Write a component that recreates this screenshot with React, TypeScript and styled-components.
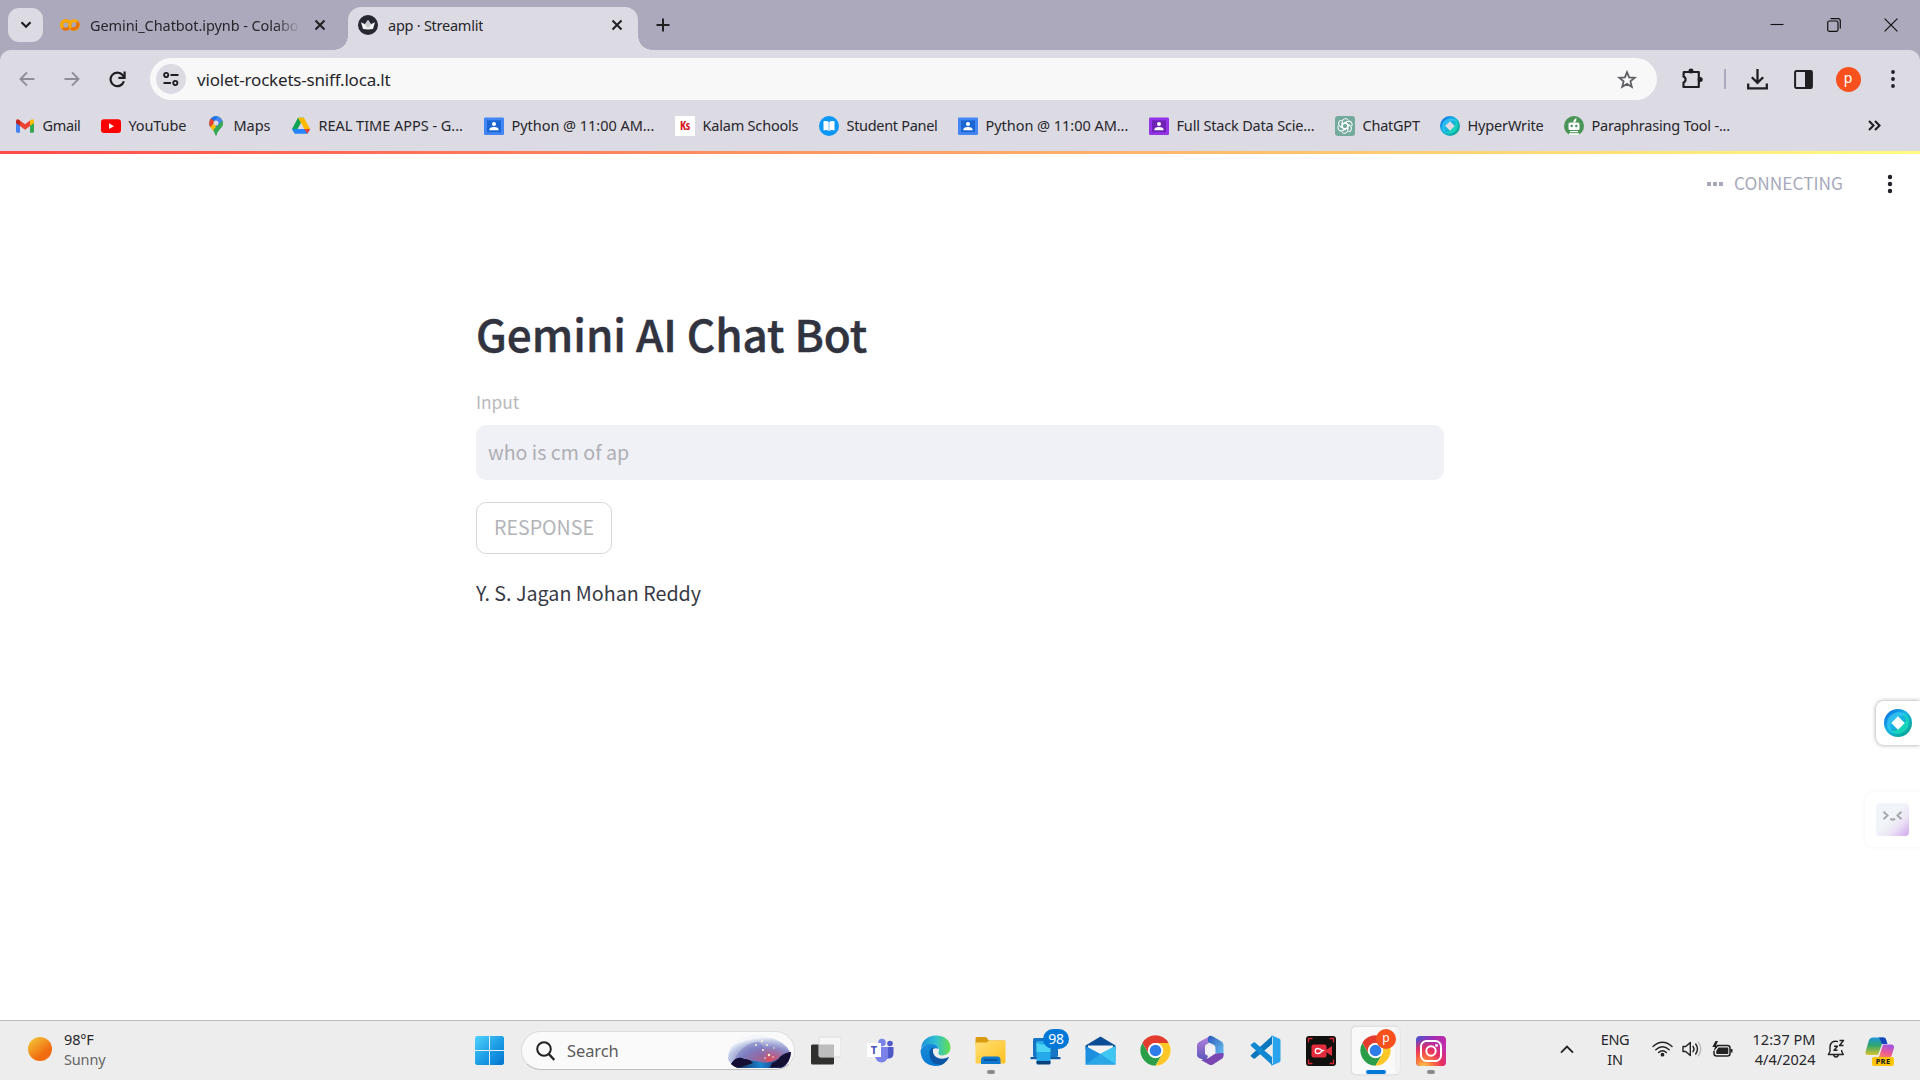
import React from "react";
import styled, { createGlobalStyle } from "styled-components";

const UI = `"Noto Sans", "Open Sans", sans-serif`;
const SOURCE = `"Noto Sans CJK JP", "Noto Sans", sans-serif`;

const GlobalStyle = createGlobalStyle`
  * { box-sizing: border-box; }
  body { margin: 0; background: #fff; overflow: hidden; }
  svg { display: block; flex: none; }
`;

const Desktop = styled.div`
  width: 1920px;
  height: 1080px;
  display: flex;
  flex-direction: column;
  overflow: hidden;
  font-family: ${UI};
  color: #26262b;
`;

/* ---------- Browser chrome ---------- */

const TabStrip = styled.header`
  height: 60px;
  margin-bottom: -10px;
  padding: 0 22px 10px 8px;
  background: #aba9bb;
  display: flex;
  align-items: center;
`;

const TabSearch = styled.button`
  width: 35px;
  height: 34px;
  border: 0;
  padding: 0;
  border-radius: 11px;
  background: #dcdae3;
  display: grid;
  place-items: center;
`;

const BackgroundTab = styled.div`
  width: 305px;
  height: 50px;
  padding: 0 22px 0 17px;
  display: flex;
  align-items: center;
  justify-content: space-between;
`;

const TabInfo = styled.div`
  display: flex;
  align-items: center;
  gap: 10px;
`;

const ActiveTab = styled.div`
  position: relative;
  width: 290px;
  height: 43px;
  margin-top: 7px;
  padding: 0 15px 7px 10px;
  border-radius: 13px 13px 0 0;
  background: #dcdae3;
  display: flex;
  align-items: center;
  justify-content: space-between;

  &::before,
  &::after {
    content: "";
    position: absolute;
    bottom: 0;
    width: 14px;
    height: 14px;
  }
  &::before {
    left: -14px;
    background: radial-gradient(circle at 0 0, transparent 13.5px, #dcdae3 14px);
  }
  &::after {
    right: -14px;
    background: radial-gradient(circle at 100% 0, transparent 13.5px, #dcdae3 14px);
  }
`;

const TabTitle = styled.span<{ $fade?: boolean; $spacing: number }>`
  width: ${(p) => (p.$fade ? "210px" : "auto")};
  overflow: hidden;
  white-space: nowrap;
  font-size: 14.5px;
  line-height: 24px;
  letter-spacing: ${(p) => p.$spacing}px;
  mask-image: ${(p) => (p.$fade ? "linear-gradient(90deg, #000 88%, transparent 100%)" : "none")};
`;

const NewTab = styled.div`
  margin-left: 18px;
`;

const WindowControls = styled.div`
  margin-left: auto;
  display: flex;
  align-items: center;
  gap: 43px;
`;

const Toolbar = styled.nav`
  height: 50px;
  padding: 8px 6px 0 19px;
  border-radius: 11px 11px 0 0;
  background: #dcdae3;
  display: flex;
  align-items: center;
`;

const NavButtons = styled.div`
  width: 131px;
  display: flex;
  gap: 29px;
`;

const Omnibox = styled.div`
  width: 1507px;
  height: 42px;
  padding: 0 20px 0 6px;
  border-radius: 21px;
  background: #f8f8f8;
  display: flex;
  align-items: center;
`;

const SiteInfo = styled.div`
  width: 30px;
  height: 30px;
  border-radius: 50%;
  background: #dcdae3;
  display: grid;
  place-items: center;
`;

const Address = styled.span`
  flex: 1;
  margin: 2px 0 0 11px;
  font-size: 17px;
  letter-spacing: -0.19px;
  line-height: 24px;
`;

const Actions = styled.div`
  padding-left: 12px;
  display: flex;
  align-items: center;
`;

const Action = styled.div<{ $width: number }>`
  width: ${(p) => p.$width}px;
  display: flex;
  justify-content: center;
`;

const Divider = styled.i`
  width: 2px;
  height: 20px;
  background: #aba9be;
`;

const Avatar = styled.span`
  width: 25px;
  height: 25px;
  border-radius: 50%;
  background: #f9511d;
  color: #fff;
  font-size: 14px;
  line-height: 22px;
  text-align: center;
`;

const Bookmarks = styled.nav`
  height: 51px;
  padding: 0 39px 0 15px;
  background: #dcdae3;
  display: flex;
  align-items: center;
`;

const Bookmark = styled.a<{ $width: number; $spacing: number }>`
  width: ${(p) => p.$width}px;
  display: flex;
  align-items: center;
  gap: 7.5px;
  white-space: nowrap;
  font-size: 14.5px;
  line-height: 24px;
  letter-spacing: ${(p) => p.$spacing}px;
`;

const BookmarkLabel = styled.span`
  padding-bottom: 2px;
`;

const Overflow = styled.div`
  margin-left: auto;
`;

/* ---------- Streamlit page ---------- */

const Decoration = styled.div`
  height: 3px;
  background: linear-gradient(90deg, #ff4b4b, #fffd80);
`;

const Page = styled.main`
  flex: 1;
  display: flex;
  flex-direction: column;
  background: #fff;
  font-family: ${SOURCE};
`;

const StatusBar = styled.div`
  height: 60px;
  padding: 0 25px 0 1707px;
  display: flex;
  align-items: center;
  justify-content: space-between;
`;

const Status = styled.div`
  display: flex;
  align-items: center;
  gap: 11px;
  color: #a6a9bb;
  font-size: 17.3px;
  line-height: 24px;
`;

const StatusText = styled.span`
  padding-bottom: 2px;
`;

const Block = styled.section`
  width: 968px;
  margin: 83px auto 0;
  display: flex;
  flex-direction: column;
  align-items: flex-start;
`;

const Title = styled.h1`
  margin: 0;
  height: 72px;
  font-size: 44px;
  line-height: 72px;
  font-weight: 500;
  color: #31333f;
  -webkit-text-stroke: 0.5px #31333f;
`;

const FieldLabel = styled.label`
  margin-top: 18px;
  height: 30px;
  font-size: 17.3px;
  line-height: 30px;
  color: #b7b8bc;
`;

const Field = styled.div`
  width: 100%;
  height: 55px;
  margin-top: 8px;
  padding-left: 12px;
  border-radius: 10px;
  background: #f0f1f6;
  color: #adaeb3;
  font-size: 19.6px;
  line-height: 54px;
`;

const ResponseButton = styled.button`
  width: 136px;
  height: 52px;
  margin-top: 22px;
  padding: 0 0 2px;
  border: 1px solid #d5d6d9;
  border-radius: 10px;
  background: #fff;
  color: #b3b4b8;
  font-family: ${SOURCE};
  font-size: 19.6px;
  line-height: 48px;
`;

const Answer = styled.p`
  margin: 23px 0 0;
  color: #383a46;
  font-size: 19.7px;
  line-height: 32px;
`;

const SideWidgets = styled.aside`
  position: absolute;
  top: 701px;
  right: 0;
  display: flex;
  flex-direction: column;
  align-items: flex-end;
  gap: 47px;
`;

const HyperTab = styled.div`
  width: 44px;
  height: 44px;
  padding: 8px;
  border-radius: 8px 0 0 8px;
  background: #fff;
  box-shadow: 0 0 4px rgba(0, 0, 0, 0.38);
`;

const MoodTab = styled.div`
  width: 55px;
  height: 55px;
  padding: 11px;
  border-radius: 9px 0 0 9px;
  background: #fff;
  box-shadow: 0 0 5px rgba(0, 0, 0, 0.05);
`;

/* ---------- Taskbar ---------- */

const Taskbar = styled.footer`
  height: 60px;
  border-top: 1px solid #bcbcbc;
  background: #ededed;
  display: flex;
  align-items: center;
`;

const Weather = styled.div`
  width: 462px;
  padding: 0 0 3px 28px;
  display: flex;
  align-items: center;
  gap: 12px;
`;

const Stack = styled.div<{ $align?: string; $spacing?: number }>`
  padding-bottom: 1px;
  display: flex;
  flex-direction: column;
  text-align: ${(p) => p.$align ?? "left"};
  font-size: 14.5px;
  line-height: 20px;
  letter-spacing: ${(p) => p.$spacing ?? 0}px;
  white-space: nowrap;
`;

const Muted = styled.span`
  color: #666;
`;

const Slot = styled.div`
  position: relative;
  width: 55px;
  height: 59px;
  display: grid;
  place-items: center;
`;

const Running = styled.i<{ $active?: boolean }>`
  position: absolute;
  bottom: 6px;
  left: 50%;
  width: ${(p) => (p.$active ? 20 : 8)}px;
  height: 4px;
  border-radius: 2px;
  transform: translateX(-50%);
  background: ${(p) => (p.$active ? "#0078d7" : "#8a8a8a")};
`;

const Search = styled.div`
  width: 274px;
  height: 39px;
  margin: 0 3px 0 4px;
  padding: 0 2px 0 14px;
  border: 1px solid #dcdcdc;
  border-bottom-color: #bfbfbf;
  border-radius: 20px;
  background: #fafafa;
  display: flex;
  align-items: center;
  overflow: hidden;
`;

const SearchText = styled.span`
  flex: 1;
  margin-left: 12px;
  color: #5c5c5c;
  font-size: 16.5px;
  letter-spacing: -0.1px;
  line-height: 24px;
`;

const Count = styled.span`
  position: absolute;
  top: 8px;
  left: 25px;
  width: 26px;
  height: 20px;
  border-radius: 10px;
  background: #0078d7;
  color: #fff;
  font-size: 14px;
  line-height: 20px;
  text-align: center;
  letter-spacing: -0.3px;
`;

const ActiveTile = styled.div`
  position: absolute;
  top: 5px;
  left: 3px;
  width: 49px;
  height: 49px;
  border-radius: 5px;
  border: 1px solid #e2e2e2;
  border-right-width: 5px;
  border-right-color: #f3f3f3;
  background: #f9f9f9;
  box-shadow: 0 0 1px #bbb;
`;

const ProfileBadge = styled(Avatar)`
  position: absolute;
  top: 8px;
  left: 28px;
  width: 20px;
  height: 20px;
  font-size: 12px;
  line-height: 17px;
`;

const Above = styled.div`
  position: relative;
`;

const Tray = styled.div`
  flex: 1;
  padding: 0 9px 3px 0;
  display: flex;
  align-items: center;
  justify-content: flex-end;
`;

const TrayCell = styled.div<{ $width: number }>`
  width: ${(p) => p.$width}px;
  display: flex;
  justify-content: center;
`;

/* ---------- Icons ---------- */

const Close = () => (
  <svg width="12" height="12" viewBox="0 0 12 12" stroke="#1f1f23" strokeWidth="2"><path d="M1.5 1.5l9 9M10.5 1.5l-9 9" /></svg>
);

const Colab = () => (
  <svg width="20" height="20" viewBox="0 0 20 20" fill="none" strokeWidth="3.1">
    <circle cx="5.8" cy="10" r="4.2" stroke="#e8710a" />
    <path d="M2.8 7A4.2 4.2 0 0 1 8.9 7.2M2.8 13A4.2 4.2 0 0 1 2.8 7" stroke="#f9ab00" />
    <circle cx="14" cy="10" r="4.3" stroke="#f9ab00" />
    <path d="M17 7a4.3 4.3 0 0 1-6 6" stroke="#e8710a" />
  </svg>
);

const Crown = () => (
  <svg width="20" height="20" viewBox="0 0 20 20">
    <circle cx="10" cy="10" r="10" fill="#262730" />
    <path d="M3 7.2L7 9.3 10 5l3 4.3 4-2.1-2 6.8q-5 .8-10 0z" fill="#f2f2f4" />
    <path d="M7 9.3L10 5l3 4.3-3 4z" fill="#c9c9cf" />
  </svg>
);

const Arrow = ({ flip }: { flip?: boolean }) => (
  <svg width="16" height="16" viewBox="0 0 16 16" fill="none" stroke="#8f8e96" strokeWidth="1.9">
    <path d={flip ? "M.5 8h14M8 1.3L14.5 8 8 14.7" : "M15.5 8h-14M8 1.3L1.5 8 8 14.7"} />
  </svg>
);

const Reload = () => (
  <svg width="17" height="17" viewBox="0 0 17 17" fill="none" stroke="#1f1f23" strokeWidth="2.2">
    <path d="M14.9 10.3A6.8 6.8 0 1 1 13.6 4l1.5 1.8" />
    <path d="M15.6.6v6.2H9.4" />
  </svg>
);

const Tune = () => (
  <svg width="16" height="14" viewBox="0 0 16 14" fill="none" stroke="#1f1f23" strokeWidth="1.9">
    <circle cx="3.2" cy="3" r="2.1" /><path d="M7.5 3H15.5M.5 11H8" /><circle cx="12.3" cy="11" r="2.1" />
  </svg>
);

const Star = () => (
  <svg width="20" height="19" viewBox="0 0 20 19" fill="none" stroke="#5f5e64" strokeWidth="1.8">
    <path d="M10 2.2l2.1 5.2 5.6.4-4.3 3.6 1.4 5.5-4.8-3-4.8 3 1.4-5.5L2.3 7.8l5.6-.4z" />
  </svg>
);

const Puzzle = () => (
  <svg width="22" height="22" viewBox="0 0 22 22">
    <path d="M2.800 4h15v15H2.500v-4.500a3.200 3.200 0 0 0 0-6z" fill="none" stroke="#1f1f23" strokeWidth="2.2" strokeLinejoin="round" />
    <circle cx="10" cy="3" r="2.5" fill="#1f1f23" /><circle cx="19.200" cy="11.400" r="2.500" fill="#1f1f23" />
  </svg>
);

const Download = () => (
  <svg width="21" height="21" viewBox="0 0 21 21" fill="none" stroke="#1f1f23" strokeWidth="2.3">
    <path d="M10.5 0v13.5M4.8 8.2l5.7 5.6 5.7-5.6M1.2 14.5v4.9h18.6v-4.9" />
  </svg>
);

const Panel = () => (
  <svg width="19" height="19" viewBox="0 0 19 19">
    <rect x="1.1" y="1.1" width="16.8" height="16.8" rx="1.2" fill="none" stroke="#1f1f23" strokeWidth="2" />
    <rect x="11" y="1" width="7" height="17" fill="#1f1f23" />
  </svg>
);

const Dots = ({ r = 1.9 }: { r?: number }) => (
  <svg width="10" height="20" viewBox="0 0 10 20" fill="#1f1f27">
    <circle cx="5" cy="3" r={r} /><circle cx="5" cy="10" r={r} /><circle cx="5" cy="17" r={r} />
  </svg>
);

const Gmail = () => (
  <svg width="20" height="20" viewBox="0 0 20 20">
    <path d="M1 5v10.5q0 1.3 1.3 1.3H5V8z" fill="#4285f4" />
    <path d="M19 5v10.5q0 1.3-1.3 1.3H15V8z" fill="#34a853" />
    <path d="M15 4.5V10l4-3V5q-.2-2.5-2.5-1.6z" fill="#fbbc04" />
    <path d="M1 7V5q.2-2.5 2.5-1.6L5 4.5V10z" fill="#c5221f" />
    <path d="M5 10V4.5l5 3.8 5-3.8V10l-5 3.8z" fill="#ea4335" />
  </svg>
);

const YouTube = () => (
  <svg width="20" height="20" viewBox="0 0 20 20">
    <rect y="3.3" width="20" height="13.7" rx="3" fill="#f00" /><path d="M8 7.3l5 2.9-5 2.9z" fill="#fff" />
  </svg>
);

const Maps = () => (
  <svg width="20" height="20" viewBox="0 0 20 20">
    <defs><clipPath id="pin"><path d="M10 .3a6.8 6.8 0 0 0-6.9 6.8c0 4.9 5.2 6.6 6.3 11.8q.6 1.4 1.2 0C11.7 13.7 17 12 17 7.1A6.9 6.9 0 0 0 10 .3" /></clipPath></defs>
    <g clipPath="url(#pin)">
      <path fill="#34a853" d="M0 0h20v20H0z" /><path fill="#fbbc04" d="M0 15L15 0 20 3 5 17z" />
      <path fill="#4285f4" d="M8 0h12v6L10 12z" /><path fill="#34a853" d="M8 13l9.5-9.5V20H6z" />
      <path fill="#1a73e8" d="M3 0h9L5 9z" /><path fill="#ea4335" d="M0 1l5 1.3 4 3.6-5.5 6z" />
    </g>
    <circle cx="10" cy="7.1" r="2.5" fill="#dcdae3" />
  </svg>
);

const Drive = () => (
  <svg width="20" height="20" viewBox="0 0 20 20">
    <path d="M7 1.8h6L4 17.8l-3-4.9z" fill="#0da352" /><path d="M7 1.8h6l6.2 11.1h-6z" fill="#ffba00" />
    <path d="M1 12.9h18.2l-2.8 4.9H4z" fill="#2684fc" /><path d="M10 7.1l3.2 5.8H6.8z" fill="#dcdae3" />
    <path d="M13.2 12.9h6l-2.8 4.9z" fill="#ea4335" />
  </svg>
);

const Classroom = ({ outer, inner }: { outer: string; inner: string }) => (
  <svg width="20" height="20" viewBox="0 0 20 20">
    <rect y="1.5" width="20" height="17.5" rx="1.2" fill={outer} /><rect x="3" y="4.3" width="14" height="12" fill={inner} />
    <circle cx="10" cy="8" r="2" fill="#fff" /><path d="M5.3 14.2q0-3.3 4.7-3.3t4.7 3.3z" fill="#fff" />
  </svg>
);

const KsMark = styled.span`
  width: 20px;
  height: 20px;
  background: #fff;
  color: #d8151f;
  font: 700 12px / 20px "Open Sans", sans-serif;
  font-stretch: 80%;
  letter-spacing: -0.2px;
  text-align: center;
`;

const Student = () => (
  <svg width="20" height="20" viewBox="0 0 20 20">
    <circle cx="10" cy="10" r="10" fill="#0a97f7" />
    <path d="M4.5 5.3q3-1 5.2.6v9q-2.2-1.3-5.2-.5zM15.5 5.3q-3-1-5.2.6v9q2.2-1.3 5.2-.5z" fill="#fff" />
  </svg>
);

const ChatGPT = () => (
  <svg width="20" height="20" viewBox="0 0 20 20">
    <rect width="20" height="20" rx="3" fill="#74aa9c" />
    <g fill="none" stroke="#fff" strokeWidth="1">
      {[0, 60, 120, 180, 240, 300].map((a) => (
        <path key={a} transform={`rotate(${a} 10 10)`} d="M7.3 11.6V5.8a3.3 3.3 0 0 1 6.1-1.6M7.3 8.4L10.2 6.7 14.8 9.4" />
      ))}
    </g>
  </svg>
);

const HyperWrite = ({ size, hole }: { size: number; hole: string }) => (
  <svg width={size} height={size} viewBox="0 0 28 28">
    <defs>
      <linearGradient id={`hw${size}`} x1="0" y1="0" x2="1" y2="1">
        <stop offset="0" stopColor="#0a5fe0" /><stop offset=".45" stopColor="#17b5e8" /><stop offset="1" stopColor="#04a07d" />
      </linearGradient>
    </defs>
    <circle cx="14" cy="14" r="14" fill={`url(#hw${size})`} />
    <path d="M3 15Q3 5 14 3q6 0 9 4-5-2-9 1l-8 8q0 4 3 8-6-3-6-9z" fill="#3fd4f2" opacity=".6" />
    <path d="M25 13q0 10-11 12-5 0-8-3 5 1 8-2l8-8q0-4-3-8 6 3 6 9z" fill="#19e3b9" opacity=".7" />
    <path d="M14 7.3l6.7 6.7-6.7 6.7L7.3 14z" fill={hole} />
  </svg>
);

const QuillBot = () => (
  <svg width="20" height="20" viewBox="0 0 20 20">
    <circle cx="10" cy="10" r="10" fill="#499557" />
    <path d="M9.2 6.5Q9.5 3 12.5 2q.4 3-2 4.5z" fill="#fff" />
    <rect x="4.5" y="6.5" width="11" height="7.5" rx="1.5" fill="#fff" />
    <circle cx="7.7" cy="10" r="1.2" fill="#499557" /><circle cx="12.3" cy="10" r="1.2" fill="#499557" />
    <path d="M6 15h8v1.3H6zM5 17.2h10v1.3q-5 2.5-10 0z" fill="#fff" />
  </svg>
);

const Mood = () => (
  <svg width="33" height="33" viewBox="0 0 33 33">
    <defs><linearGradient id="mood" x1=".3" y1=".3" x2="1" y2="1"><stop offset=".2" stopColor="#f1f5f9" /><stop offset=".55" stopColor="#ece4f5" /><stop offset="1" stopColor="#cfa6ec" /></linearGradient></defs>
    <rect width="33" height="33" rx="4" fill="url(#mood)" />
    <path d="M7.5 8.8l4 3.7-4 3.7M25.5 8.8l-4 3.7 4 3.7M14.5 15.5q2.2 2.5 4.5 0" fill="none" stroke="#a5a8ad" strokeWidth="2" />
  </svg>
);

const Sun = () => (
  <svg width="24" height="24" viewBox="0 0 24 24">
    <defs><linearGradient id="sun" x1="0" y1="0" x2=".8" y2="1"><stop stopColor="#f2cf3b" /><stop offset=".75" stopColor="#f16c10" /></linearGradient></defs>
    <circle cx="12" cy="12" r="12" fill="url(#sun)" />
  </svg>
);

const Windows = () => (
  <svg width="29" height="29" viewBox="0 0 29 29">
    <defs><linearGradient id="win" gradientUnits="userSpaceOnUse" x1="0" y1="0" x2="29" y2="29"><stop stopColor="#52d3fd" /><stop offset=".55" stopColor="#1a9be4" /><stop offset="1" stopColor="#0474d0" /></linearGradient></defs>
    <path d="M1.5 0H14v14H0V1.5zM15 0h12.500L29 1.500V14H15zM0 15h14v14H1.500L0 27.500zM15 15h14v12.500L27.500 29H15z" fill="url(#win)" />
  </svg>
);

const SearchArt = () => (
  <svg width="65" height="34" viewBox="0 0 65 34">
    <defs>
      <radialGradient id="sky" cx=".62" cy=".8" r=".72"><stop stopColor="#e04c55" /><stop offset=".3" stopColor="#a8679a" /><stop offset=".55" stopColor="#8a88c6" /><stop offset=".85" stopColor="#c3cde8" /><stop offset="1" stopColor="#f5f6fb" /></radialGradient>
      <linearGradient id="ground" x1="0" x2="1" y1="0" y2="0"><stop stopColor="#171235" /><stop offset=".5" stopColor="#1c86d0" /><stop offset=".72" stopColor="#1b4c92" /><stop offset="1" stopColor="#241640" /></linearGradient>
    </defs>
    <path d="M1 26Q0 14 12 6 30-4 48 5q15 7 16 17l-8 10H6z" fill="url(#sky)" />
    <path d="M6 28q10-20 26-20 6 4 8 20z" fill="#6f74bd" opacity=".45" />
    <path d="M4 30q6-9 13-5 6 2 12 2 12 4 22-2 4-6 13-7-1 12-9 16H10z" fill="url(#ground)" />
    <path d="M4 30q6-9 13-5 6 0 9 4l-12 4H8zM45 29q6-2 8-6 5-4 11-5-2 11-9 15l-12 1z" fill="#150f33" />
    <g fill="#fff2dc"><circle cx="29" cy="11" r="1" /><circle cx="35" cy="7" r="1" /><circle cx="40" cy="11" r="1" /><circle cx="36" cy="16" r="1" /><circle cx="42" cy="21" r="1.2" /><circle cx="47" cy="14" r=".8" /><circle cx="38" cy="24" r=".8" /><circle cx="32" cy="4" r=".7" /><circle cx="46" cy="23" r=".7" /></g>
  </svg>
);

const Magnifier = () => (
  <svg width="19" height="20" viewBox="0 0 19 20" fill="none" stroke="#222" strokeWidth="2"><circle cx="8" cy="8" r="6.8" /><path d="M12.8 13l5.5 6" strokeWidth="2.4" /></svg>
);

const TaskView = () => (
  <svg width="30" height="30" viewBox="0 0 30 30">
    <rect y="8.5" width="23" height="20" rx="1.5" fill="#30302e" /><rect x="8" y="1" width="22" height="20" rx="1.5" fill="#f6f6f6" stroke="#dcdcdc" />
    <path d="M8 8.5h15V21H8z" fill="#bdbdbd" />
  </svg>
);

const TeamsLetter = styled.span`
  position: absolute;
  left: 14px;
  top: 22px;
  width: 14px;
  height: 14px;
  background: #fff;
  color: #4b53bc;
  font: 700 11px / 14px ${UI};
  text-align: center;
`;

const Teams = () => (
  <svg width="29" height="25" viewBox="0 0 29 25">
    <circle cx="16" cy="4.5" r="3.8" fill="#7b83eb" /><circle cx="24" cy="5.5" r="2.8" fill="#5059c9" />
    <path d="M20 9h7.5v7q-.5 4.5-5 4.5H20z" fill="#5059c9" /><path d="M9 9h13v9a6.5 6.5 0 0 1-13 0z" fill="#7b83eb" />
  </svg>
);

const Edge = () => (
  <svg width="31" height="31" viewBox="0 0 31 31">
    <defs>
      <linearGradient id="e1" x1="0" x2="1" y1=".4" y2=".4"><stop stopColor="#1b90d8" /><stop offset=".5" stopColor="#30bfd3" /><stop offset="1" stopColor="#66e04c" /></linearGradient>
      <linearGradient id="e2" x1="0" x2=".4" y1="0" y2="1"><stop stopColor="#1b8fdc" /><stop offset="1" stopColor="#0576cf" /></linearGradient>
    </defs>
    <path d="M1 13Q3 1 16 .5 30 1 30.500 13q-.5 7-8 7.500-5-.5-4-3 2-5-4-7Q6 8 1 13z" fill="url(#e1)" />
    <path d="M.5 15.5Q3 9 10 9q7 0 8.500 5-5-2-7 2-2 9 6 12.500 5 1 9-3-4 5.500-11 5.500Q1 30 .5 15.500z" fill="url(#e2)" />
    <path d="M9.5 19Q9 14 13.500 12q-2.500 7 3.500 10.500 5.500 3 12-.8-1.500 5-7.500 8Q10 30 9.500 19z" fill="#0d56a6" />
  </svg>
);

const Explorer = () => (
  <svg width="31" height="29" viewBox="0 0 31 29">
    <defs><linearGradient id="fold" x1="0" y1="0" x2="1" y2="1"><stop stopColor="#ffe076" /><stop offset="1" stopColor="#ffc01f" /></linearGradient></defs>
    <path d="M.5 2.500Q.5 1 2 1h9l3 3.500h15.500V10H.5z" fill="#d99c10" /><path d="M.5 6.500h11l3-2h16V26q0 1.500-1.500 1.500H2Q.5 27.500.5 26z" fill="url(#fold)" />
    <path d="M6 28v-4q0-3.500 3.500-3.500h13q3 0 3 3.500v4z" fill="#0f79cd" /><path d="M9 24h13.500" stroke="#084d94" strokeWidth="1.5" />
  </svg>
);

const PhoneLink = () => (
  <svg width="31" height="28" viewBox="0 0 31 28">
    <rect x="3" y="1" width="25" height="19" rx="1.5" fill="#1576c4" /><path d="M.5 20h30v2.200H.5z" fill="#0d5ba3" />
    <rect x="6.500" y="4" width="14" height="23" rx="1.500" fill="#25a9e8" /><path d="M6.500 24h14v2q0 1.500-1.500 1.500H8q-1.500 0-1.500-1.500z" fill="#0d3f7c" /><path d="M6.500 5.500q7 4 14 0V15h-14z" fill="#4cd2f2" />
  </svg>
);

const Mail = () => (
  <svg width="31" height="29" viewBox="0 0 31 29">
    <path d="M.5 9.500L15.500.5l15 9v4H.5z" fill="#0a4f96" /><path d="M3 9.500h25v12H3z" fill="#f3f3f3" />
    <path d="M.5 10l15 8 15-8v18.500H.5z" fill="#1c8fdf" /><path d="M30.500 10v18.500L15 18z" fill="#3fc6f2" /><path d="M.5 28.500L15.500 18l15 10.500z" fill="#2aa7e6" />
  </svg>
);

const Chrome = () => (
  <svg width="31" height="31" viewBox="0 0 48 48">
    <circle cx="24" cy="24" r="23.5" fill="#fff" />
    <path d="M3.650 12.250A23.500 23.500 0 0 1 44.350 12.250H24A11.750 11.750 0 0 0 13.800 29.900z" fill="#e33b2e" />
    <path d="M3.650 12.250L13.800 29.900A11.750 11.750 0 0 0 34.200 29.900L24 47.500A23.500 23.500 0 0 1 3.650 12.250z" fill="#2a9e49" />
    <path d="M44.350 12.250A23.500 23.500 0 0 1 24 47.500L34.200 29.900A11.750 11.750 0 0 0 24 12.250z" fill="#fdc827" />
    <circle cx="24" cy="24" r="11.5" fill="#fff" /><circle cx="24" cy="24" r="9" fill="#2f7de8" />
  </svg>
);

const Office = () => (
  <svg width="29" height="31" viewBox="0 0 29 31">
    <defs>
      <linearGradient id="o1" x1="0" y1="0" x2="0" y2="1"><stop stopColor="#b883e0" /><stop offset="1" stopColor="#5a55b8" /></linearGradient>
      <linearGradient id="o2" x1="0" y1="0" x2="1" y2="1"><stop stopColor="#2b57b9" /><stop offset="1" stopColor="#6cc6f4" /></linearGradient>
    </defs>
    <path d="M14 1L3 7Q1 8 1 11v9q0 2 2 3l7 3 2-5-3-2v-8q0-1 2-2l5-3z" fill="url(#o1)" />
    <path d="M13 1q2-.5 4 .5l8.500 5q2 1 2 3.500v11l-8-3v-5.500q0-1.500-1.500-2.500L12 7q-1-3 1-6z" fill="url(#o2)" />
    <path d="M27.500 18v3q0 2-2 3L17 29.500q-2 1-4 0L5 25q4.500.5 7.500-2l7-4.500z" fill="#7946b4" />
    <path d="M14.300 10.500l4.500 2.600v5l-4.500 2.700-4.500-2.700v-5z" fill="#f3f1f7" />
  </svg>
);

const VSCode = () => (
  <svg width="31" height="31" viewBox="0 0 31 31">
    <path d="M22 1v8L5 23.500q-.8.6-1.500 0L1 21.500q-.8-.8 0-1.600z" fill="#0a76bd" />
    <path d="M22 30v-8L5 7.500q-.8-.6-1.500 0L1 9.500q-.8.8 0 1.600z" fill="#1088d2" />
    <path d="M22 .5l7.500 3.300q1 .5 1 1.700v20q0 1.200-1 1.700L22 30.500q-.8 0-1.200-.6l2-1.400V2.500l-2-1.400Q21.200.5 22 .5z" fill="#28a4ee" />
  </svg>
);

const Recorder = () => (
  <svg width="30" height="30" viewBox="0 0 30 30">
    <rect width="30" height="30" rx="3" fill="#10110f" />
    <path d="M2.500 6.500v-4h4M23.500 2.500h4v4M27.500 23.500v4h-4M6.500 27.500h-4v-4" fill="none" stroke="#d82431" strokeWidth="1.3" />
    <rect x="5.5" y="8.500" width="15" height="13" rx="2" fill="#e52c3c" /><path d="M20 14l6-4v10l-6-4z" fill="#e52c3c" />
    <path d="M16.800 15q-3-2.500-5-2.500a2.600 2.600 0 0 0 0 5.200q2 0 4.200-2.700 1-1.200 2.200-.2" fill="none" stroke="#fff" strokeWidth="1.3" />
  </svg>
);

const Instagram = () => (
  <svg width="30" height="30" viewBox="0 0 30 30">
    <defs>
      <linearGradient id="ig1" x1="0" y1="0" x2="1" y2=".3"><stop stopColor="#4b55cb" /><stop offset=".6" stopColor="#a82bb2" /><stop offset="1" stopColor="#c32eaa" /></linearGradient>
      <radialGradient id="ig2" cx=".25" cy="1.050" r=".95"><stop stopColor="#ffd55a" /><stop offset=".3" stopColor="#fd7a3a" /><stop offset=".65" stopColor="#e8305f" /><stop offset="1" stopColor="#e8305f" stopOpacity="0" /></radialGradient>
    </defs>
    <rect width="30" height="30" rx="4" fill="url(#ig1)" /><rect width="30" height="30" rx="4" fill="url(#ig2)" />
    <g fill="none" stroke="#fff" strokeWidth="2"><rect x="5" y="5" width="20" height="20" rx="5.5" /><circle cx="15" cy="15" r="4.7" /></g><circle cx="20.500" cy="9.500" r="1.4" fill="#fff" />
  </svg>
);

const Wifi = () => (
  <svg width="21" height="16" viewBox="0 0 21 16" fill="none" stroke="#222" strokeWidth="1.4" strokeLinecap="round">
    <path d="M1 5.500Q10.500-3 20 5.500M3.800 8.700q6.700-6 13.400 0M6.600 11.500q3.900-3.500 7.800 0" /><circle cx="10.500" cy="13.700" r="1.2" fill="#222" />
  </svg>
);

const Volume = () => (
  <svg width="20" height="16" viewBox="0 0 20 16" fill="none" stroke="#222" strokeWidth="1.4" strokeLinejoin="round" strokeLinecap="round">
    <path d="M1 5.500h2.700L8.300 1.500v13L3.700 10.500H1zM11 5.300q2 2.700 0 5.400M13.700 3q3.500 5 0 10" /><path d="M16.300 1.200q5 6.800 0 13.600" stroke="#bbb" />
  </svg>
);

const Battery = () => (
  <svg width="21" height="17" viewBox="0 0 21 17">
    <path d="M5 4.500h10.500q2.500 0 2.500 2.500v5.500q0 2.500-2.500 2.500h-11Q2 15 2 12.500V10" fill="none" stroke="#222" strokeWidth="1.5" />
    <path d="M6.500 6.500h9q.8 0 .8.800v4.900q0 .8-.8.800H5q-.8 0-.8-.8V10zM18.500 8h2v3.500h-2z" fill="#222" /><path d="M3.500 0L.3 6H3L1.500 10.500 6.800 4.500H4L6 0z" fill="#222" />
  </svg>
);

const Bell = () => (
  <svg width="19" height="20" viewBox="0 0 19 20" fill="none" stroke="#222" strokeWidth="1.4" strokeLinejoin="round">
    <path d="M11 2.600Q3.500 1 3 8v4.500L1.300 15.500h15L14.700 12.500V11M6.500 15.700q.5 2.300 2.500 2.300t2.500-2.300" /><path d="M7 7.300h3.500L7 11.200h3.500M12.500 1.500h4L12.500 6.500h4" />
  </svg>
);

const PreBadge = styled.span`
  position: absolute;
  left: 7px;
  bottom: 0;
  width: 22px;
  height: 9px;
  border-radius: 2px;
  background: #ffc50a;
  color: #222;
  font: 800 7.5px / 9px ${UI};
  letter-spacing: 0.3px;
  text-align: center;
`;

const CopilotMark = styled.div`
  position: relative;
  margin-top: 4px;
`;

const Copilot = () => (
  <CopilotMark>
    <svg width="30" height="29" viewBox="0 0 30 29">
      <defs>
        <linearGradient id="c1" x1="0" y1="0" x2="0" y2="1"><stop stopColor="#1f95dc" /><stop offset=".45" stopColor="#2fa56d" /><stop offset="1" stopColor="#d8c62f" /></linearGradient>
        <linearGradient id="c2" x1=".7" y1="0" x2=".3" y2="1"><stop stopColor="#a153e6" /><stop offset=".6" stopColor="#ee5b93" /><stop offset="1" stopColor="#f98a55" /></linearGradient>
      </defs>
      <path d="M7.500.5h11q2 0 2.500 2L22 7h-5l-4 11H3q-3 0-2.500-3L4 3q1-2.500 3.500-2.500z" fill="url(#c1)" />
      <path d="M14 .5h4.500q2 0 2.500 2L22.500 7H17z" fill="#1746b8" /><path d="M18 7.500h8q3.500 0 3 3.500l-2.500 8-2 2H11q3 0 4-4z" fill="url(#c2)" />
    </svg>
    <PreBadge>PRE</PreBadge>
  </CopilotMark>
);

/* ---------- Data ---------- */

const blue = <Classroom outer="#4285f4" inner="#1b66d2" />;

const bookmarks: { label: string; icon: React.ReactNode; width: number; spacing: number }[] = [
  { label: "Gmail", icon: <Gmail />, width: 86, spacing: -0.35 },
  { label: "YouTube", icon: <YouTube />, width: 105, spacing: -0.12 },
  { label: "Maps", icon: <Maps />, width: 85, spacing: -0.05 },
  { label: "REAL TIME APPS - G...", icon: <Drive />, width: 193, spacing: -0.02 },
  { label: "Python @ 11:00 AM...", icon: blue, width: 191, spacing: -0.04 },
  { label: "Kalam Schools", icon: <KsMark>Ks</KsMark>, width: 144, spacing: -0.2 },
  { label: "Student Panel", icon: <Student />, width: 139, spacing: -0.31 },
  { label: "Python @ 11:00 AM...", icon: blue, width: 191, spacing: -0.04 },
  { label: "Full Stack Data Scie...", icon: <Classroom outer="#9334e6" inner="#6f22b5" />, width: 186, spacing: -0.17 },
  { label: "ChatGPT", icon: <ChatGPT />, width: 105, spacing: -0.24 },
  { label: "HyperWrite", icon: <HyperWrite size={20} hole="#dcdae3" />, width: 124, spacing: -0.16 },
  { label: "Paraphrasing Tool -...", icon: <QuillBot />, width: 170, spacing: -0.22 },
];

export default function App() {
  return (
    <Desktop>
      <GlobalStyle />
      <TabStrip>
        <TabSearch>
          <svg width="12" height="8" viewBox="0 0 12 8" fill="none" stroke="#1f1f23" strokeWidth="2.2"><path d="M1.5 1.3L6 5.8l4.5-4.5" /></svg>
        </TabSearch>
        <BackgroundTab>
          <TabInfo><Colab /><TabTitle $fade $spacing={-0.08}>Gemini_Chatbot.ipynb - Colabo</TabTitle></TabInfo>
          <Close />
        </BackgroundTab>
        <ActiveTab>
          <TabInfo><Crown /><TabTitle $spacing={-0.25}>app · Streamlit</TabTitle></TabInfo>
          <Close />
        </ActiveTab>
        <NewTab>
          <svg width="14" height="14" viewBox="0 0 14 14" stroke="#1f1f23" strokeWidth="2"><path d="M7 .5v13M.5 7h13" /></svg>
        </NewTab>
        <WindowControls>
          <svg width="14" height="14" viewBox="0 0 14 14"><path d="M.5 6.5h13" stroke="#111" strokeWidth="1.1" /></svg>
          <svg width="14" height="14" viewBox="0 0 14 14" fill="none" stroke="#111" strokeWidth="1.2"><rect x=".7" y="3" width="10.3" height="10.3" rx="1.5" /><path d="M3.500 .7h7.500q2.300 0 2.300 2.300v7.500" /></svg>
          <svg width="14" height="14" viewBox="0 0 14 14" stroke="#111" strokeWidth="1.2"><path d="M.6.6l12.800 12.800M13.400.6L.6 13.400" /></svg>
        </WindowControls>
      </TabStrip>
      <Toolbar>
        <NavButtons><Arrow /><Arrow flip /><Reload /></NavButtons>
        <Omnibox>
          <SiteInfo><Tune /></SiteInfo>
          <Address>violet-rockets-sniff.loca.lt</Address>
          <Star />
        </Omnibox>
        <Actions>
          <Action $width={46}><Puzzle /></Action>
          <Action $width={19}><Divider /></Action>
          <Action $width={47}><Download /></Action>
          <Action $width={44}><Panel /></Action>
          <Action $width={46}><Avatar>p</Avatar></Action>
          <Action $width={43}><Dots /></Action>
        </Actions>
      </Toolbar>
      <Bookmarks>
        {bookmarks.map((b, i) => (
          <Bookmark key={i} $width={b.width} $spacing={b.spacing}>{b.icon}<BookmarkLabel>{b.label}</BookmarkLabel></Bookmark>
        ))}
        <Overflow>
          <svg width="13" height="11" viewBox="0 0 13 11" fill="none" stroke="#1f1f23" strokeWidth="2.1"><path d="M1 1l4.5 4.5L1 10M7 1l4.5 4.5L7 10" /></svg>
        </Overflow>
      </Bookmarks>
      <Decoration />
      <Page>
        <StatusBar>
          <Status>
            <svg width="16" height="4" viewBox="0 0 16 4" fill="#a6a9bb"><path d="M0 0h4v4H0zM6 0h4v4H6zM12 0h4v4h-4z" /></svg>
            <StatusText>CONNECTING</StatusText>
          </Status>
          <Dots r={2.2} />
        </StatusBar>
        <Block>
          <Title>Gemini AI Chat Bot</Title>
          <FieldLabel>Input</FieldLabel>
          <Field>who is cm of ap</Field>
          <ResponseButton>RESPONSE</ResponseButton>
          <Answer>Y. S. Jagan Mohan Reddy</Answer>
        </Block>
      </Page>
      <SideWidgets>
        <HyperTab><HyperWrite size={28} hole="#fff" /></HyperTab>
        <MoodTab><Mood /></MoodTab>
      </SideWidgets>
      <Taskbar>
        <Weather><Sun /><Stack $spacing={-0.15}><span>98°F</span><Muted>Sunny</Muted></Stack></Weather>
        <Slot><Windows /></Slot>
        <Search><Magnifier /><SearchText>Search</SearchText><SearchArt /></Search>
        <Slot><TaskView /></Slot>
        <Slot><Teams /><TeamsLetter>T</TeamsLetter></Slot>
        <Slot><Edge /></Slot>
        <Slot><Explorer /><Running /></Slot>
        <Slot><PhoneLink /><Count>98</Count></Slot>
        <Slot><Mail /></Slot>
        <Slot><Chrome /></Slot>
        <Slot><Office /></Slot>
        <Slot><VSCode /></Slot>
        <Slot><Recorder /></Slot>
        <Slot><ActiveTile /><Above><Chrome /></Above><ProfileBadge>p</ProfileBadge><Running $active /></Slot>
        <Slot><Instagram /><Running /></Slot>
        <Tray>
          <TrayCell $width={48}><svg width="14" height="9" viewBox="0 0 14 9" fill="none" stroke="#222" strokeWidth="1.9"><path d="M1 7.7l6-6 6 6" /></svg></TrayCell>
          <TrayCell $width={48}><Stack $align="center" $spacing={-0.3}><span>ENG</span><span>IN</span></Stack></TrayCell>
          <TrayCell $width={46}><Wifi /></TrayCell>
          <TrayCell $width={14}><Volume /></TrayCell>
          <TrayCell $width={46}><Battery /></TrayCell>
          <TrayCell $width={78}><Stack $align="right" $spacing={0.02}><span>12:37 PM</span><span>4/4/2024</span></Stack></TrayCell>
          <TrayCell $width={26}><Bell /></TrayCell>
          <TrayCell $width={62}><Copilot /></TrayCell>
        </Tray>
      </Taskbar>
    </Desktop>
  );
}
